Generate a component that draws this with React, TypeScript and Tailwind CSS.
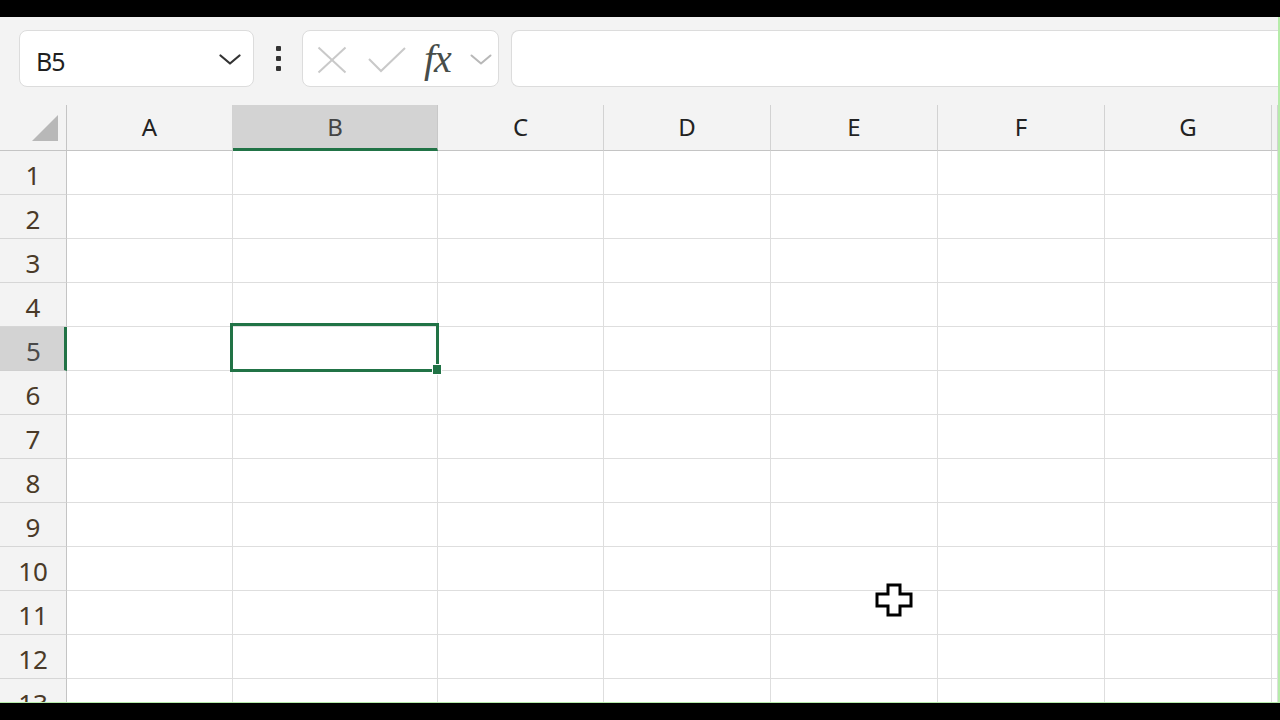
import React from "react";

const columns = [
  { label: "A", w: 166 },
  { label: "B", w: 205 },
  { label: "C", w: 166 },
  { label: "D", w: 167 },
  { label: "E", w: 167 },
  { label: "F", w: 167 },
  { label: "G", w: 167 },
  { label: "", w: 0 },
];

const gridCols = "grid grid-cols-[67px_166px_205px_166px_167px_167px_167px_167px_1fr]";
const rows = [1, 2, 3, 4, 5, 6, 7, 8, 9, 10, 11, 12, 13];

const font = { fontFamily: '"Noto Sans", "Open Sans", sans-serif' };

function Chevron({ className, color, width = 2.2 }: { className: string; color: string; width?: number }) {
  return (
    <svg className={className} viewBox="0 0 22 11" fill="none">
      <polyline points="1.5,1.5 11,9.5 20.5,1.5" stroke={color} strokeWidth={width} strokeLinecap="round" strokeLinejoin="round" />
    </svg>
  );
}

function Toolbar() {
  return (
    <div className="h-[88px] bg-[#f3f3f3] flex items-start pt-[13px] pl-[19px]">
      {/* Name box */}
      <div className="w-[235px] h-[57px] bg-white border border-[#dcdcdc] rounded-[8px] flex items-center justify-between pl-[16px] pr-[12px]">
        <span className="text-[25px] text-[#1f1f1f] leading-none tracking-[-1px] pt-[5px]" style={font}>B5</span>
        <Chevron className="w-[22px] h-[11px] mt-[1px]" color="#333333" />
      </div>
      {/* dots */}
      <div className="w-[48px] h-[57px] flex flex-col items-center justify-center gap-[5px]">
        <div className="w-[5px] h-[5px] bg-[#333] rounded-[1px]" />
        <div className="w-[5px] h-[5px] bg-[#333] rounded-[1px]" />
        <div className="w-[5px] h-[5px] bg-[#333] rounded-[1px]" />
      </div>
      {/* cancel / enter / fx */}
      <div className="w-[197px] h-[57px] bg-white border border-[#dcdcdc] rounded-[8px] flex items-center pl-[14px]">
        <svg className="w-[30px] h-[28px] mt-[2px]" viewBox="0 0 30 28" fill="none">
          <line x1="1.5" y1="1.5" x2="28.5" y2="26.5" stroke="#c9c9c9" strokeWidth="2" />
          <line x1="28.5" y1="1.5" x2="1.5" y2="26.5" stroke="#c9c9c9" strokeWidth="2" />
        </svg>
        <svg className="w-[38px] h-[26px] ml-[21px] mt-[2px]" viewBox="0 0 38 26" fill="none">
          <polyline points="1,12 13,24 37,1" stroke="#c9c9c9" strokeWidth="2" />
        </svg>
        <span
          className="ml-[18px] text-[40px] italic text-[#474d4a] leading-none w-[40px] tracking-[-1px]"
          style={{ fontFamily: '"Liberation Serif", "DejaVu Serif", serif' }}
        >
          fx
        </span>
        <Chevron className="w-[22px] h-[11px] ml-[6px] mt-[1px]" color="#b8b8b8" width={2} />
      </div>
      {/* formula input */}
      <div className="flex-1 ml-[12px] h-[57px] bg-white border-y border-l border-[#dcdcdc] rounded-l-[8px]" />
    </div>
  );
}

function HeaderRow() {
  return (
    <div className={`${gridCols} grid-rows-[46px] h-[46px] bg-[#f3f3f3] leading-none`} style={font}>
      <div className="border-r border-b border-[#c4c4c4] flex items-end justify-end pr-[8px] pb-[9px]">
        <svg className="w-[26px] h-[26px]" viewBox="0 0 26 26">
          <polygon points="26,0 26,26 0,26" fill="#b8b8b8" />
        </svg>
      </div>
      {columns.map((c, i) =>
        c.label === "B" ? (
          <div
            key={i}
            className="bg-[#d3d3d3] border-r border-[#c8c8c8] border-b-[3px] border-b-[#217346] flex items-center justify-center text-[24px] text-[#444]"
          >
            {c.label}
          </div>
        ) : (
          <div
            key={i}
            className="border-r border-b border-[#d2d2d2] border-b-[#c4c4c4] flex items-center justify-center text-[24px] text-[#222] pb-[1px]"
          >
            {c.label}
          </div>
        )
      )}
    </div>
  );
}

function Row({ n }: { n: number }) {
  const active = n === 5;
  return (
    <div className={`${gridCols} grid-rows-[44px] h-[44px] shrink-0 leading-none`}>
      <div
        className={
          active
            ? "bg-[#d3d3d3] border-b border-[#cfcfcf] border-r-[3px] border-r-[#217346] flex items-center justify-center text-[26px] text-[#4a4a4a] pl-[3px] pt-[4px]"
            : "bg-[#f3f3f3] border-b border-[#d6d6d6] border-r border-r-[#c4c4c4] flex items-center justify-center text-[26px] text-[#4a3a28] pt-[4px]"
        }
        style={font}
      >
        {n}
      </div>
      {columns.map((c, i) => (
        <div key={i} className="relative bg-white border-r border-b border-[#dedede]">
          {active && c.label === "B" && (
            <div className="absolute -top-[4px] -left-[3px] -right-[2px] -bottom-[2px] border-[3px] border-[#217346] z-10">
              <div className="absolute -right-[6px] -bottom-[6px] w-[10px] h-[11px] bg-[#217346] border border-white" />
            </div>
          )}
        </div>
      ))}
    </div>
  );
}

export default function App() {
  return (
    <div className="w-[1280px] h-[720px] bg-black flex flex-col overflow-hidden">
      <div className="h-[17px] shrink-0" />
      <div className="relative h-[686px] shrink-0 flex flex-col bg-[#f3f3f3] border-r-2 border-b border-[#b6ecaa] overflow-hidden">
        <Toolbar />
        <HeaderRow />
        <div className="flex-1 flex flex-col overflow-hidden bg-white">
          {rows.map((n) => (
            <Row key={n} n={n} />
          ))}
        </div>
        {/* mouse cursor */}
        <svg className="absolute left-[875px] top-[566px] w-[38px] h-[34px] z-20" viewBox="0 0 38 34">
          <path
            d="M13 2 H25 V11 H36 V23 H25 V32 H13 V23 H2 V11 H13 Z"
            fill="#ffffff"
            stroke="#000000"
            strokeWidth="3"
            strokeLinejoin="miter"
          />
        </svg>
      </div>
      <div className="flex-1" />
    </div>
  );
}
